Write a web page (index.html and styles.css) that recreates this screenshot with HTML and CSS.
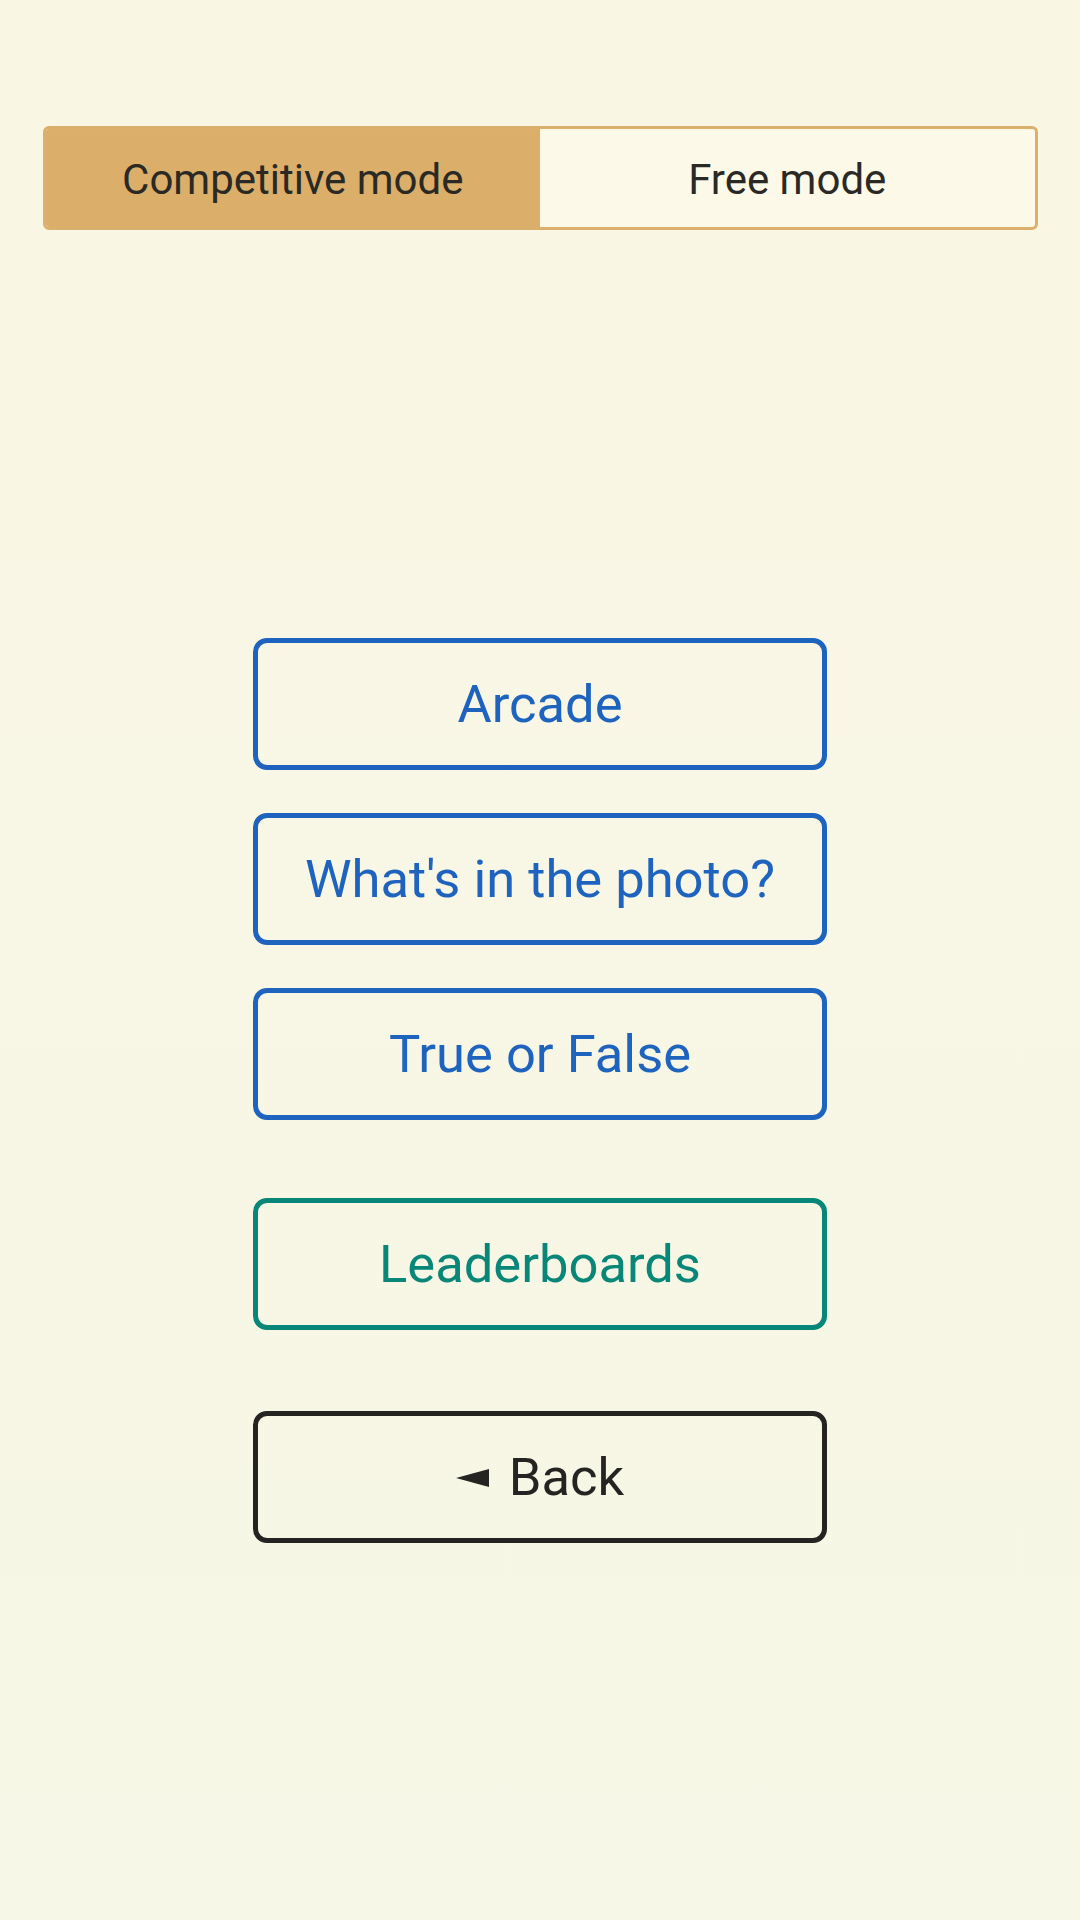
FILE: index.html
```html
<!DOCTYPE html>
<html lang="en">
<head>
    <meta charset="UTF-8">
    <meta name="viewport" content="width=device-width, initial-scale=1.0">
    <title>Game Menu</title>
    <link rel="stylesheet" href="styles.css">
</head>
<body>
    <div class="menu">
        <div class="mode-toggle">
            <button class="mode active">Competitive mode</button>
            <button class="mode">Free mode</button>
        </div>

        <div class="game-list">
            <button class="menu-button blue">Arcade</button>
            <button class="menu-button blue">What's in the photo?</button>
            <button class="menu-button blue">True or False</button>
            <button class="menu-button teal spaced">Leaderboards</button>
            <button class="menu-button dark spaced back">
                <svg class="arrow" width="33" height="18" viewBox="0 0 33 18"><polygon points="0,9 33,0 33,18" fill="currentColor"/></svg>Back
            </button>
        </div>
    </div>
</body>
</html>
```

FILE: styles.css
```css
/* Menu styles */
body {
    margin: 0;
    padding: 0;
    width: 1080px;
    height: 1920px;
    font-family: Roboto, "Noto Sans", sans-serif;
    background: linear-gradient(#faf6e4, #f6f7e6);
    color: #262624;
}

.menu {
    display: flex;
    flex-direction: column;
    align-items: center;
    padding-top: 126px;
}

.mode-toggle {
    display: flex;
    width: 995px;
    height: 104px;
    box-sizing: border-box;
    border: 3px solid #dbb06c;
    border-radius: 6px;
    overflow: hidden;
    background: #fdf9e9;
}

.mode {
    flex: 1;
    border: none;
    background: transparent;
    font-family: inherit;
    font-size: 42px;
    padding-top: 4px;
    color: #2a2925;
    cursor: pointer;
}

.mode.active {
    background: #dbaf69;
}

.game-list {
    display: flex;
    flex-direction: column;
    align-items: center;
    gap: 43px;
    margin-top: 408px;
}

.menu-button {
    display: flex;
    align-items: center;
    justify-content: center;
    width: 574px;
    height: 132px;
    box-sizing: border-box;
    background: transparent;
    border: 5px solid;
    border-radius: 14px;
    font-family: inherit;
    font-size: 52.5px;
    cursor: pointer;
}

.menu-button.spaced {
    margin-top: 35px;
}

.menu-button.back {
    margin-top: 38px;
}

.blue {
    border-color: #1e63be;
    color: #1e63be;
}

.teal {
    border-color: #088678;
    color: #088678;
}

.dark {
    border-color: #252422;
    color: #252422;
}

.arrow {
    margin-right: 20px;
    margin-top: 2px;
}
```
